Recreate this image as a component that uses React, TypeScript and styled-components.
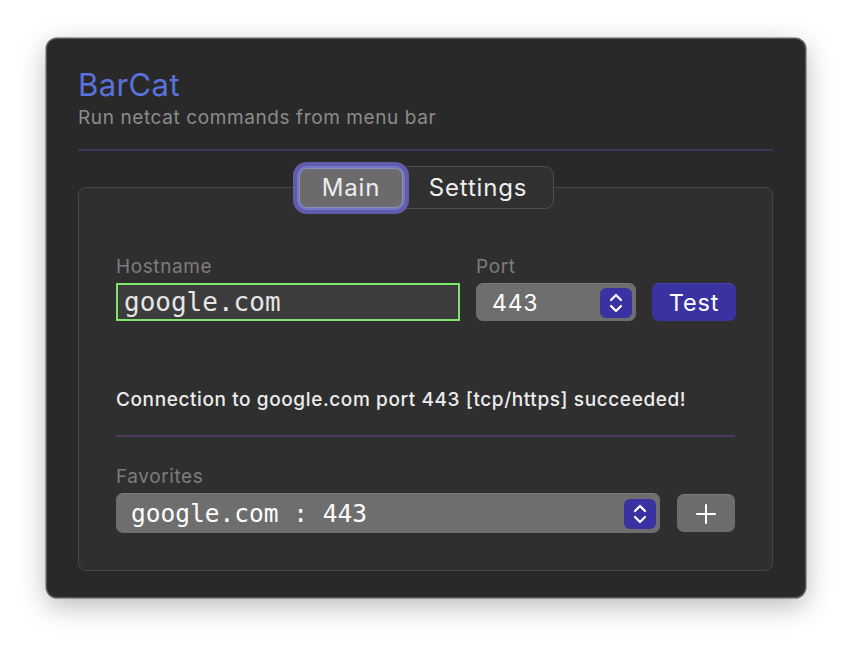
import React from "react";
import styled, { createGlobalStyle } from "styled-components";

const GlobalStyle = createGlobalStyle`
  html, body { margin: 0; padding: 0; background: #ffffff; }
  * { box-sizing: border-box; }
`;

const SANS = `Inter, "Noto Sans", "Liberation Sans", sans-serif`;
const MONO = `"DejaVu Sans Mono", "Liberation Mono", monospace`;

const Page = styled.div`
  width: 852px;
  height: 652px;
  padding: 38px 0 0 46px;
  background: #ffffff;
`;

const Window = styled.div`
  width: 760px;
  height: 560px;
  border-radius: 11px;
  background: #292929;
  border: 1px solid #5a5a5a;
  box-shadow: 0 8px 28px rgba(0, 0, 0, 0.28), 0 0 0 0.5px rgba(0, 0, 0, 0.6);
  padding: 28px 32px 26px 31px;
  display: flex;
  flex-direction: column;
  font-family: ${SANS};
`;

const Title = styled.h1`
  margin: 0;
  font-size: 31px;
  font-weight: 400;
  line-height: 36px;
  color: #5a72dd;
  letter-spacing: 0.4px;
`;

const Subtitle = styled.p`
  margin: 3px 0 0;
  font-size: 19px;
  line-height: 24px;
  color: #8c8c8c;
  letter-spacing: 0.6px;
`;

const Rule = styled.div<{ $color: string; $gap: number }>`
  height: 2px;
  background: ${(p) => p.$color};
  margin-top: ${(p) => p.$gap}px;
`;

const Panel = styled.section`
  margin-top: 36px;
  flex: 1;
  border: 1px solid #474747;
  border-radius: 8px;
  background: #2f2f2f;
  padding: 0 37px 0 37px;
  display: flex;
  flex-direction: column;
`;

const TabBar = styled.div`
  align-self: center;
  margin-top: -22px;
  margin-right: 4px;
  display: flex;
  align-items: center;
  height: 43px;
  width: 261px;
  background: #303030;
  border: 1px solid #4e4e4e;
  border-radius: 9px;
  padding: 0 0 0 5px;
`;

const Tab = styled.div<{ $active?: boolean }>`
  height: 40px;
  flex: ${(p) => (p.$active ? "0 0 104px" : "1")};
  display: flex;
  align-items: center;
  justify-content: center;
  font-size: 24px;
  letter-spacing: 0.8px;
  color: #eeeeee;
  border-radius: 8px;
  background: ${(p) => (p.$active ? "#6b6b6b" : "transparent")};
  box-shadow: ${(p) =>
    p.$active
      ? "inset 0 0 0 1px #8d8dbf, 0 0 0 2px #7775c4, 0 0 0 6px #605eac"
      : "none"};
`;

const Label = styled.div`
  font-size: 19px;
  line-height: 24px;
  letter-spacing: 0.6px;
  color: #7d7d7d;
  margin-bottom: 4px;
`;

const FieldsRow = styled.div`
  margin-top: 46px;
  display: grid;
  grid-template-columns: 344px 160px 84px;
  column-gap: 16px;
  align-items: end;
`;

const Field = styled.div`
  display: flex;
  flex-direction: column;
`;

const TextInput = styled.div`
  height: 38px;
  border: 2px solid #7ee56c;
  background: #3c3c3c;
  display: flex;
  align-items: center;
  padding-left: 6px;
  font-family: ${MONO};
  font-size: 26px;
  color: #e6e6e6;
`;

const Popup = styled.div<{ $mono?: boolean }>`
  height: ${(p) => (p.$mono ? "40px" : "38px")};
  border-radius: 7px;
  background: #6e6e6e;
  border-top: 1px solid #7c7c7c;
  display: flex;
  align-items: center;
  justify-content: space-between;
  padding: 0 4px 0 ${(p) => (p.$mono ? "15px" : "16px")};
  font-family: ${(p) => (p.$mono ? MONO : SANS)};
  font-size: ${(p) => (p.$mono ? "24.5px" : "23px")};
  letter-spacing: ${(p) => (p.$mono ? "0" : "0.8px")};
  color: #ffffff;
`;

const Stepper = styled.div`
  width: 32px;
  height: 30px;
  border-radius: 6px;
  background: #3a32a2;
  display: flex;
  align-items: center;
  justify-content: center;
`;

const Button = styled.div<{ $primary?: boolean }>`
  height: 38px;
  border-radius: 7px;
  background: ${(p) => (p.$primary ? "#3b32a1" : "#6c6c6c")};
  border-top: 1px solid ${(p) => (p.$primary ? "#4c44b0" : "#7c7c7c")};
  display: flex;
  align-items: center;
  justify-content: center;
  font-size: 23.5px;
  letter-spacing: 0.8px;
  color: #ffffff;
`;

const Message = styled.div`
  margin-top: 67px;
  font-size: 19px;
  line-height: 24px;
  letter-spacing: 0.6px;
  font-weight: 500;
  color: #ececec;
`;

const FavRow = styled.div`
  display: grid;
  grid-template-columns: 544px 58px;
  column-gap: 17px;
  align-items: center;
`;

const FavBlock = styled.div`
  margin-top: 28px;
  display: flex;
  flex-direction: column;
`;

const Chevrons = () => (
  <svg width="18" height="24" viewBox="0 0 18 24" fill="none">
    <path d="M4 9 L9 4 L14 9" stroke="#ffffff" strokeWidth="2.2" strokeLinecap="round" strokeLinejoin="round" />
    <path d="M4 15 L9 20 L14 15" stroke="#ffffff" strokeWidth="2.2" strokeLinecap="round" strokeLinejoin="round" />
  </svg>
);

const PlusIcon = () => (
  <svg width="22" height="22" viewBox="0 0 22 22" fill="none">
    <path d="M11 2 V20 M2 11 H20" stroke="#ffffff" strokeWidth="2" strokeLinecap="round" />
  </svg>
);

export default function App() {
  return (
    <>
      <GlobalStyle />
      <Page>
        <Window>
          <Title>BarCat</Title>
          <Subtitle>Run netcat commands from menu bar</Subtitle>
          <Rule $color="#3b3958" $gap={19} />
          <Panel>
            <TabBar>
              <Tab $active>Main</Tab>
              <Tab>Settings</Tab>
            </TabBar>
            <FieldsRow>
              <Field>
                <Label>Hostname</Label>
                <TextInput>google.com</TextInput>
              </Field>
              <Field>
                <Label>Port</Label>
                <Popup>
                  443
                  <Stepper>
                    <Chevrons />
                  </Stepper>
                </Popup>
              </Field>
              <Button $primary>Test</Button>
            </FieldsRow>
            <Message>Connection to google.com port 443 [tcp/https] succeeded!</Message>
            <Rule $color="#4a3b5e" $gap={23} />
            <FavBlock>
              <Label>Favorites</Label>
              <FavRow>
                <Popup $mono>
                  google.com : 443
                  <Stepper>
                    <Chevrons />
                  </Stepper>
                </Popup>
                <Button>
                  <PlusIcon />
                </Button>
              </FavRow>
            </FavBlock>
          </Panel>
        </Window>
      </Page>
    </>
  );
}
